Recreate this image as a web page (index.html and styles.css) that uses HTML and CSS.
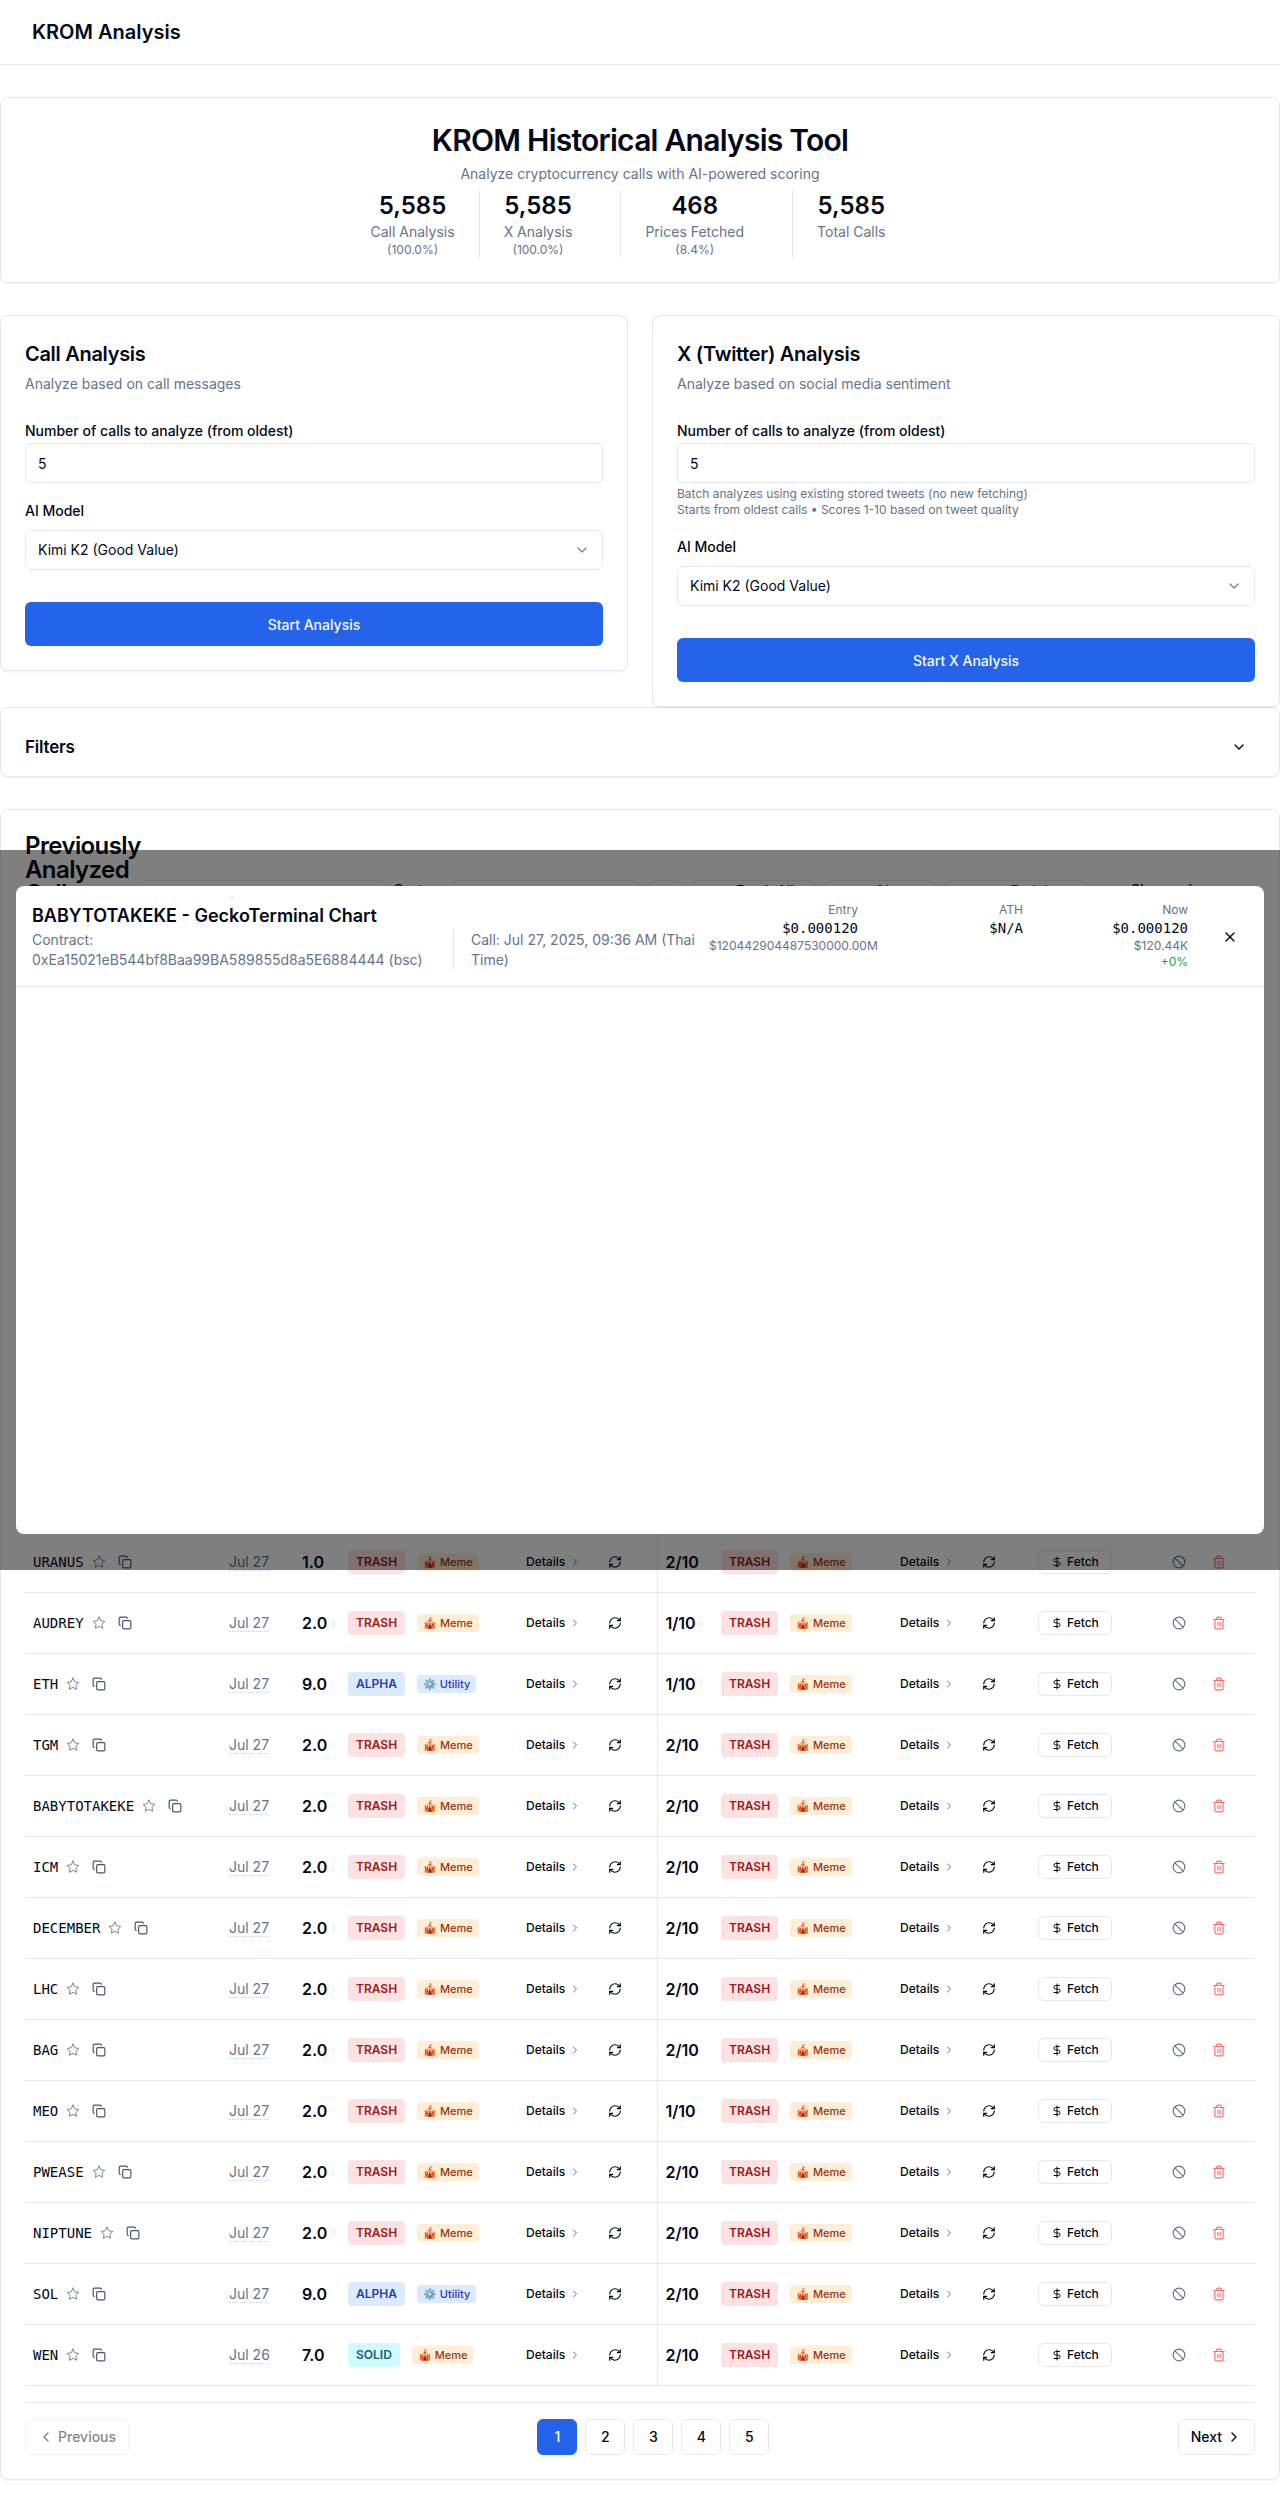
FILE: index.html
```html
<!DOCTYPE html>
<html lang="en">
<head>
  <meta charset="UTF-8">
  <meta name="viewport" content="width=device-width, initial-scale=1.0">
  <title>KROM Analysis</title>
  <link rel="stylesheet" href="styles.css">
</head>
<body>

<svg class="sprite" xmlns="http://www.w3.org/2000/svg">
  <symbol id="i-star" viewBox="0 0 24 24"><polygon points="12 2 15.09 8.26 22 9.27 17 14.14 18.18 21.02 12 17.77 5.82 21.02 7 14.14 2 9.27 8.91 8.26 12 2"/></symbol>
  <symbol id="i-copy" viewBox="0 0 24 24"><rect x="8" y="8" width="14" height="14" rx="2" ry="2"/><path d="M4 16c-1.1 0-2-.9-2-2V4c0-1.1.9-2 2-2h10c1.1 0 2 .9 2 2"/></symbol>
  <symbol id="i-right" viewBox="0 0 24 24"><path d="m9 18 6-6-6-6"/></symbol>
  <symbol id="i-left" viewBox="0 0 24 24"><path d="m15 18-6-6 6-6"/></symbol>
  <symbol id="i-down" viewBox="0 0 24 24"><path d="m6 9 6 6 6-6"/></symbol>
  <symbol id="i-refresh" viewBox="0 0 24 24"><path d="M3 12a9 9 0 0 1 9-9 9.75 9.75 0 0 1 6.74 2.74L21 8"/><path d="M21 3v5h-5"/><path d="M21 12a9 9 0 0 1-9 9 9.75 9.75 0 0 1-6.74-2.74L3 16"/><path d="M8 16H3v5"/></symbol>
  <symbol id="i-dollar" viewBox="0 0 24 24"><path d="M12 2v20"/><path d="M17 5H9.5a3.5 3.5 0 0 0 0 7h5a3.5 3.5 0 0 1 0 7H6"/></symbol>
  <symbol id="i-ban" viewBox="0 0 24 24"><circle cx="12" cy="12" r="10"/><path d="m4.9 4.9 14.2 14.2"/></symbol>
  <symbol id="i-trash" viewBox="0 0 24 24"><path d="M3 6h18"/><path d="M19 6v14c0 1-1 2-2 2H7c-1 0-2-1-2-2V6"/><path d="M8 6V4c0-1 1-2 2-2h4c1 0 2 1 2 2v2"/><path d="M10 11v6"/><path d="M14 11v6"/></symbol>
  <symbol id="i-x" viewBox="0 0 24 24"><path d="M18 6 6 18"/><path d="m6 6 12 12"/></symbol>
</svg>

<header class="topbar">
  <h1 class="brand">KROM Analysis</h1>
</header>

<main class="page">

  <section class="card hero">
    <h2 class="hero-title">KROM Historical Analysis Tool</h2>
    <p class="hero-sub">Analyze cryptocurrency calls with AI-powered scoring</p>
    <div class="stats">
      <div class="stat">
        <div class="stat-num">5,585</div>
        <div class="stat-label">Call Analysis</div>
        <div class="stat-pct">(100.0%)</div>
      </div>
      <div class="stat">
        <div class="stat-num">5,585</div>
        <div class="stat-label">X Analysis</div>
        <div class="stat-pct">(100.0%)</div>
      </div>
      <div class="stat">
        <div class="stat-num">468</div>
        <div class="stat-label">Prices Fetched</div>
        <div class="stat-pct">(8.4%)</div>
      </div>
      <div class="stat">
        <div class="stat-num">5,585</div>
        <div class="stat-label">Total Calls</div>
      </div>
    </div>
  </section>

  <div class="panels">
    <section class="card panel">
      <h3 class="panel-title">Call Analysis</h3>
      <p class="panel-sub">Analyze based on call messages</p>
      <label class="field-label">Number of calls to analyze (from oldest)</label>
      <input class="input" type="text" value="5">
      <label class="field-label model-label">AI Model</label>
      <div class="select">Kimi K2 (Good Value)<svg class="icon select-arrow"><use href="#i-down"/></svg></div>
      <button class="primary-btn">Start Analysis</button>
    </section>

    <section class="card panel">
      <h3 class="panel-title">X (Twitter) Analysis</h3>
      <p class="panel-sub">Analyze based on social media sentiment</p>
      <label class="field-label">Number of calls to analyze (from oldest)</label>
      <input class="input" type="text" value="5">
      <p class="help">Batch analyzes using existing stored tweets (no new fetching)<br>Starts from oldest calls • Scores 1-10 based on tweet quality</p>
      <label class="field-label model-label">AI Model</label>
      <div class="select">Kimi K2 (Good Value)<svg class="icon select-arrow"><use href="#i-down"/></svg></div>
      <button class="primary-btn">Start X Analysis</button>
    </section>
  </div>

  <section class="card filters">
    <h3 class="filters-title">Filters</h3>
    <svg class="icon filters-arrow"><use href="#i-down"/></svg>
  </section>

  <section class="card calls">
    <div class="calls-head">
      <h2 class="calls-title">Previously Analyzed Calls</h2>
      <div class="controls">
        <div class="control search"></div>
        <span class="control-text sort-label">Sort</span>
        <div class="control sort-select"></div>
        <div class="control sort-dir"></div>
        <div class="control fetch-all">Fetch All</div>
        <div class="control clear-btn">Clear</div>
        <div class="control enrich-btn">Enrich</div>
        <span class="control-text show-label">Show coins</span>
      </div>
    </div>

    <table class="calls-table">
      <colgroup>
        <col class="c-token"><col class="c-date"><col class="c-score"><col class="c-tags"><col class="c-details"><col class="c-refresh">
        <col class="c-xscore"><col class="c-xtags"><col class="c-details"><col class="c-xrefresh"><col class="c-fetch"><col class="c-actions">
      </colgroup>
      <tbody>
        <!-- rows above this point sit behind the chart modal -->
        <tr class="under-modal"><td colspan="12"></td></tr>

        <tr>
          <td><div class="token"><span class="ticker">URANUS</span><svg class="icon star"><use href="#i-star"/></svg><svg class="icon copy"><use href="#i-copy"/></svg></div></td>
          <td><span class="date">Jul 27</span></td>
          <td class="score">1.0</td>
          <td><div class="tags"><span class="tier trash">TRASH</span><span class="tag meme">🎪 Meme</span></div></td>
          <td><span class="details">Details<svg class="icon"><use href="#i-right"/></svg></span></td>
          <td><svg class="icon refresh"><use href="#i-refresh"/></svg></td>
          <td class="score x-score">2/10</td>
          <td><div class="tags"><span class="tier trash">TRASH</span><span class="tag meme">🎪 Meme</span></div></td>
          <td><span class="details">Details<svg class="icon"><use href="#i-right"/></svg></span></td>
          <td><svg class="icon refresh"><use href="#i-refresh"/></svg></td>
          <td><span class="fetch"><svg class="icon"><use href="#i-dollar"/></svg>Fetch</span></td>
          <td><div class="actions"><svg class="icon ban"><use href="#i-ban"/></svg><svg class="icon del"><use href="#i-trash"/></svg></div></td>
        </tr>
        <tr>
          <td><div class="token"><span class="ticker">AUDREY</span><svg class="icon star"><use href="#i-star"/></svg><svg class="icon copy"><use href="#i-copy"/></svg></div></td>
          <td><span class="date">Jul 27</span></td>
          <td class="score">2.0</td>
          <td><div class="tags"><span class="tier trash">TRASH</span><span class="tag meme">🎪 Meme</span></div></td>
          <td><span class="details">Details<svg class="icon"><use href="#i-right"/></svg></span></td>
          <td><svg class="icon refresh"><use href="#i-refresh"/></svg></td>
          <td class="score x-score">1/10</td>
          <td><div class="tags"><span class="tier trash">TRASH</span><span class="tag meme">🎪 Meme</span></div></td>
          <td><span class="details">Details<svg class="icon"><use href="#i-right"/></svg></span></td>
          <td><svg class="icon refresh"><use href="#i-refresh"/></svg></td>
          <td><span class="fetch"><svg class="icon"><use href="#i-dollar"/></svg>Fetch</span></td>
          <td><div class="actions"><svg class="icon ban"><use href="#i-ban"/></svg><svg class="icon del"><use href="#i-trash"/></svg></div></td>
        </tr>
        <tr>
          <td><div class="token"><span class="ticker">ETH</span><svg class="icon star"><use href="#i-star"/></svg><svg class="icon copy"><use href="#i-copy"/></svg></div></td>
          <td><span class="date">Jul 27</span></td>
          <td class="score">9.0</td>
          <td><div class="tags"><span class="tier alpha">ALPHA</span><span class="tag utility">⚙️ Utility</span></div></td>
          <td><span class="details">Details<svg class="icon"><use href="#i-right"/></svg></span></td>
          <td><svg class="icon refresh"><use href="#i-refresh"/></svg></td>
          <td class="score x-score">1/10</td>
          <td><div class="tags"><span class="tier trash">TRASH</span><span class="tag meme">🎪 Meme</span></div></td>
          <td><span class="details">Details<svg class="icon"><use href="#i-right"/></svg></span></td>
          <td><svg class="icon refresh"><use href="#i-refresh"/></svg></td>
          <td><span class="fetch"><svg class="icon"><use href="#i-dollar"/></svg>Fetch</span></td>
          <td><div class="actions"><svg class="icon ban"><use href="#i-ban"/></svg><svg class="icon del"><use href="#i-trash"/></svg></div></td>
        </tr>
        <tr>
          <td><div class="token"><span class="ticker">TGM</span><svg class="icon star"><use href="#i-star"/></svg><svg class="icon copy"><use href="#i-copy"/></svg></div></td>
          <td><span class="date">Jul 27</span></td>
          <td class="score">2.0</td>
          <td><div class="tags"><span class="tier trash">TRASH</span><span class="tag meme">🎪 Meme</span></div></td>
          <td><span class="details">Details<svg class="icon"><use href="#i-right"/></svg></span></td>
          <td><svg class="icon refresh"><use href="#i-refresh"/></svg></td>
          <td class="score x-score">2/10</td>
          <td><div class="tags"><span class="tier trash">TRASH</span><span class="tag meme">🎪 Meme</span></div></td>
          <td><span class="details">Details<svg class="icon"><use href="#i-right"/></svg></span></td>
          <td><svg class="icon refresh"><use href="#i-refresh"/></svg></td>
          <td><span class="fetch"><svg class="icon"><use href="#i-dollar"/></svg>Fetch</span></td>
          <td><div class="actions"><svg class="icon ban"><use href="#i-ban"/></svg><svg class="icon del"><use href="#i-trash"/></svg></div></td>
        </tr>
        <tr>
          <td><div class="token"><span class="ticker">BABYTOTAKEKE</span><svg class="icon star"><use href="#i-star"/></svg><svg class="icon copy"><use href="#i-copy"/></svg></div></td>
          <td><span class="date">Jul 27</span></td>
          <td class="score">2.0</td>
          <td><div class="tags"><span class="tier trash">TRASH</span><span class="tag meme">🎪 Meme</span></div></td>
          <td><span class="details">Details<svg class="icon"><use href="#i-right"/></svg></span></td>
          <td><svg class="icon refresh"><use href="#i-refresh"/></svg></td>
          <td class="score x-score">2/10</td>
          <td><div class="tags"><span class="tier trash">TRASH</span><span class="tag meme">🎪 Meme</span></div></td>
          <td><span class="details">Details<svg class="icon"><use href="#i-right"/></svg></span></td>
          <td><svg class="icon refresh"><use href="#i-refresh"/></svg></td>
          <td><span class="fetch"><svg class="icon"><use href="#i-dollar"/></svg>Fetch</span></td>
          <td><div class="actions"><svg class="icon ban"><use href="#i-ban"/></svg><svg class="icon del"><use href="#i-trash"/></svg></div></td>
        </tr>
        <tr>
          <td><div class="token"><span class="ticker">ICM</span><svg class="icon star"><use href="#i-star"/></svg><svg class="icon copy"><use href="#i-copy"/></svg></div></td>
          <td><span class="date">Jul 27</span></td>
          <td class="score">2.0</td>
          <td><div class="tags"><span class="tier trash">TRASH</span><span class="tag meme">🎪 Meme</span></div></td>
          <td><span class="details">Details<svg class="icon"><use href="#i-right"/></svg></span></td>
          <td><svg class="icon refresh"><use href="#i-refresh"/></svg></td>
          <td class="score x-score">2/10</td>
          <td><div class="tags"><span class="tier trash">TRASH</span><span class="tag meme">🎪 Meme</span></div></td>
          <td><span class="details">Details<svg class="icon"><use href="#i-right"/></svg></span></td>
          <td><svg class="icon refresh"><use href="#i-refresh"/></svg></td>
          <td><span class="fetch"><svg class="icon"><use href="#i-dollar"/></svg>Fetch</span></td>
          <td><div class="actions"><svg class="icon ban"><use href="#i-ban"/></svg><svg class="icon del"><use href="#i-trash"/></svg></div></td>
        </tr>
        <tr>
          <td><div class="token"><span class="ticker">DECEMBER</span><svg class="icon star"><use href="#i-star"/></svg><svg class="icon copy"><use href="#i-copy"/></svg></div></td>
          <td><span class="date">Jul 27</span></td>
          <td class="score">2.0</td>
          <td><div class="tags"><span class="tier trash">TRASH</span><span class="tag meme">🎪 Meme</span></div></td>
          <td><span class="details">Details<svg class="icon"><use href="#i-right"/></svg></span></td>
          <td><svg class="icon refresh"><use href="#i-refresh"/></svg></td>
          <td class="score x-score">2/10</td>
          <td><div class="tags"><span class="tier trash">TRASH</span><span class="tag meme">🎪 Meme</span></div></td>
          <td><span class="details">Details<svg class="icon"><use href="#i-right"/></svg></span></td>
          <td><svg class="icon refresh"><use href="#i-refresh"/></svg></td>
          <td><span class="fetch"><svg class="icon"><use href="#i-dollar"/></svg>Fetch</span></td>
          <td><div class="actions"><svg class="icon ban"><use href="#i-ban"/></svg><svg class="icon del"><use href="#i-trash"/></svg></div></td>
        </tr>
        <tr>
          <td><div class="token"><span class="ticker">LHC</span><svg class="icon star"><use href="#i-star"/></svg><svg class="icon copy"><use href="#i-copy"/></svg></div></td>
          <td><span class="date">Jul 27</span></td>
          <td class="score">2.0</td>
          <td><div class="tags"><span class="tier trash">TRASH</span><span class="tag meme">🎪 Meme</span></div></td>
          <td><span class="details">Details<svg class="icon"><use href="#i-right"/></svg></span></td>
          <td><svg class="icon refresh"><use href="#i-refresh"/></svg></td>
          <td class="score x-score">2/10</td>
          <td><div class="tags"><span class="tier trash">TRASH</span><span class="tag meme">🎪 Meme</span></div></td>
          <td><span class="details">Details<svg class="icon"><use href="#i-right"/></svg></span></td>
          <td><svg class="icon refresh"><use href="#i-refresh"/></svg></td>
          <td><span class="fetch"><svg class="icon"><use href="#i-dollar"/></svg>Fetch</span></td>
          <td><div class="actions"><svg class="icon ban"><use href="#i-ban"/></svg><svg class="icon del"><use href="#i-trash"/></svg></div></td>
        </tr>
        <tr>
          <td><div class="token"><span class="ticker">BAG</span><svg class="icon star"><use href="#i-star"/></svg><svg class="icon copy"><use href="#i-copy"/></svg></div></td>
          <td><span class="date">Jul 27</span></td>
          <td class="score">2.0</td>
          <td><div class="tags"><span class="tier trash">TRASH</span><span class="tag meme">🎪 Meme</span></div></td>
          <td><span class="details">Details<svg class="icon"><use href="#i-right"/></svg></span></td>
          <td><svg class="icon refresh"><use href="#i-refresh"/></svg></td>
          <td class="score x-score">2/10</td>
          <td><div class="tags"><span class="tier trash">TRASH</span><span class="tag meme">🎪 Meme</span></div></td>
          <td><span class="details">Details<svg class="icon"><use href="#i-right"/></svg></span></td>
          <td><svg class="icon refresh"><use href="#i-refresh"/></svg></td>
          <td><span class="fetch"><svg class="icon"><use href="#i-dollar"/></svg>Fetch</span></td>
          <td><div class="actions"><svg class="icon ban"><use href="#i-ban"/></svg><svg class="icon del"><use href="#i-trash"/></svg></div></td>
        </tr>
        <tr>
          <td><div class="token"><span class="ticker">MEO</span><svg class="icon star"><use href="#i-star"/></svg><svg class="icon copy"><use href="#i-copy"/></svg></div></td>
          <td><span class="date">Jul 27</span></td>
          <td class="score">2.0</td>
          <td><div class="tags"><span class="tier trash">TRASH</span><span class="tag meme">🎪 Meme</span></div></td>
          <td><span class="details">Details<svg class="icon"><use href="#i-right"/></svg></span></td>
          <td><svg class="icon refresh"><use href="#i-refresh"/></svg></td>
          <td class="score x-score">1/10</td>
          <td><div class="tags"><span class="tier trash">TRASH</span><span class="tag meme">🎪 Meme</span></div></td>
          <td><span class="details">Details<svg class="icon"><use href="#i-right"/></svg></span></td>
          <td><svg class="icon refresh"><use href="#i-refresh"/></svg></td>
          <td><span class="fetch"><svg class="icon"><use href="#i-dollar"/></svg>Fetch</span></td>
          <td><div class="actions"><svg class="icon ban"><use href="#i-ban"/></svg><svg class="icon del"><use href="#i-trash"/></svg></div></td>
        </tr>
        <tr>
          <td><div class="token"><span class="ticker">PWEASE</span><svg class="icon star"><use href="#i-star"/></svg><svg class="icon copy"><use href="#i-copy"/></svg></div></td>
          <td><span class="date">Jul 27</span></td>
          <td class="score">2.0</td>
          <td><div class="tags"><span class="tier trash">TRASH</span><span class="tag meme">🎪 Meme</span></div></td>
          <td><span class="details">Details<svg class="icon"><use href="#i-right"/></svg></span></td>
          <td><svg class="icon refresh"><use href="#i-refresh"/></svg></td>
          <td class="score x-score">2/10</td>
          <td><div class="tags"><span class="tier trash">TRASH</span><span class="tag meme">🎪 Meme</span></div></td>
          <td><span class="details">Details<svg class="icon"><use href="#i-right"/></svg></span></td>
          <td><svg class="icon refresh"><use href="#i-refresh"/></svg></td>
          <td><span class="fetch"><svg class="icon"><use href="#i-dollar"/></svg>Fetch</span></td>
          <td><div class="actions"><svg class="icon ban"><use href="#i-ban"/></svg><svg class="icon del"><use href="#i-trash"/></svg></div></td>
        </tr>
        <tr>
          <td><div class="token"><span class="ticker">NIPTUNE</span><svg class="icon star"><use href="#i-star"/></svg><svg class="icon copy"><use href="#i-copy"/></svg></div></td>
          <td><span class="date">Jul 27</span></td>
          <td class="score">2.0</td>
          <td><div class="tags"><span class="tier trash">TRASH</span><span class="tag meme">🎪 Meme</span></div></td>
          <td><span class="details">Details<svg class="icon"><use href="#i-right"/></svg></span></td>
          <td><svg class="icon refresh"><use href="#i-refresh"/></svg></td>
          <td class="score x-score">2/10</td>
          <td><div class="tags"><span class="tier trash">TRASH</span><span class="tag meme">🎪 Meme</span></div></td>
          <td><span class="details">Details<svg class="icon"><use href="#i-right"/></svg></span></td>
          <td><svg class="icon refresh"><use href="#i-refresh"/></svg></td>
          <td><span class="fetch"><svg class="icon"><use href="#i-dollar"/></svg>Fetch</span></td>
          <td><div class="actions"><svg class="icon ban"><use href="#i-ban"/></svg><svg class="icon del"><use href="#i-trash"/></svg></div></td>
        </tr>
        <tr>
          <td><div class="token"><span class="ticker">SOL</span><svg class="icon star"><use href="#i-star"/></svg><svg class="icon copy"><use href="#i-copy"/></svg></div></td>
          <td><span class="date">Jul 27</span></td>
          <td class="score">9.0</td>
          <td><div class="tags"><span class="tier alpha">ALPHA</span><span class="tag utility">⚙️ Utility</span></div></td>
          <td><span class="details">Details<svg class="icon"><use href="#i-right"/></svg></span></td>
          <td><svg class="icon refresh"><use href="#i-refresh"/></svg></td>
          <td class="score x-score">2/10</td>
          <td><div class="tags"><span class="tier trash">TRASH</span><span class="tag meme">🎪 Meme</span></div></td>
          <td><span class="details">Details<svg class="icon"><use href="#i-right"/></svg></span></td>
          <td><svg class="icon refresh"><use href="#i-refresh"/></svg></td>
          <td><span class="fetch"><svg class="icon"><use href="#i-dollar"/></svg>Fetch</span></td>
          <td><div class="actions"><svg class="icon ban"><use href="#i-ban"/></svg><svg class="icon del"><use href="#i-trash"/></svg></div></td>
        </tr>
        <tr>
          <td><div class="token"><span class="ticker">WEN</span><svg class="icon star"><use href="#i-star"/></svg><svg class="icon copy"><use href="#i-copy"/></svg></div></td>
          <td><span class="date">Jul 26</span></td>
          <td class="score">7.0</td>
          <td><div class="tags"><span class="tier solid">SOLID</span><span class="tag meme">🎪 Meme</span></div></td>
          <td><span class="details">Details<svg class="icon"><use href="#i-right"/></svg></span></td>
          <td><svg class="icon refresh"><use href="#i-refresh"/></svg></td>
          <td class="score x-score">2/10</td>
          <td><div class="tags"><span class="tier trash">TRASH</span><span class="tag meme">🎪 Meme</span></div></td>
          <td><span class="details">Details<svg class="icon"><use href="#i-right"/></svg></span></td>
          <td><svg class="icon refresh"><use href="#i-refresh"/></svg></td>
          <td><span class="fetch"><svg class="icon"><use href="#i-dollar"/></svg>Fetch</span></td>
          <td><div class="actions"><svg class="icon ban"><use href="#i-ban"/></svg><svg class="icon del"><use href="#i-trash"/></svg></div></td>
        </tr>
      </tbody>
    </table>

    <div class="pagination">
      <button class="page-btn nav disabled"><svg class="icon"><use href="#i-left"/></svg>Previous</button>
      <div class="page-nums">
        <button class="page-btn num active">1</button>
        <button class="page-btn num">2</button>
        <button class="page-btn num">3</button>
        <button class="page-btn num">4</button>
        <button class="page-btn num">5</button>
      </div>
      <button class="page-btn nav">Next<svg class="icon"><use href="#i-right"/></svg></button>
    </div>
  </section>
</main>

<div class="overlay">
  <div class="modal">
    <div class="modal-head">
      <div class="modal-info">
        <h3 class="modal-title">BABYTOTAKEKE - GeckoTerminal Chart</h3>
        <div class="modal-meta">
          <div class="contract">Contract: 0xEa15021eB544bf8Baa99BA589855d8a5E6884444 (bsc)</div>
          <div class="call-time">Call: Jul 27, 2025, 09:36 AM (Thai Time)</div>
        </div>
      </div>
      <div class="prices">
        <div class="price">
          <div class="price-label">Entry</div>
          <div class="price-val">$0.000120</div>
          <div class="price-cap">$120442904487530000.00M</div>
        </div>
        <div class="price">
          <div class="price-label">ATH</div>
          <div class="price-val">$N/A</div>
        </div>
        <div class="price">
          <div class="price-label">Now</div>
          <div class="price-val">$0.000120</div>
          <div class="price-cap">$120.44K</div>
          <div class="price-gain">+0%</div>
        </div>
      </div>
      <svg class="icon modal-close"><use href="#i-x"/></svg>
    </div>
  </div>
</div>

</body>
</html>
```

FILE: styles.css
```css
* {
  box-sizing: border-box;
}

body {
  font-family: Inter, "Noto Sans", sans-serif;
  background-color: #fff;
  margin: 0;
  color: #020817;
  font-size: 14px;
  line-height: 20px;
  position: relative;
}

h1, h2, h3, p {
  margin: 0;
}

button {
  font-family: inherit;
}

.sprite {
  display: none;
}

.icon {
  width: 12px;
  height: 12px;
  fill: none;
  stroke: currentColor;
  stroke-width: 2;
  stroke-linecap: round;
  stroke-linejoin: round;
  flex-shrink: 0;
}

.topbar {
  height: 65px;
  padding: 0 32px;
  display: flex;
  align-items: center;
  border-bottom: 1px solid #e2e8f0;
}

.brand {
  font-size: 20px;
  font-weight: 600;
  line-height: 28px;
}

.page {
  padding: 32px 0;
}

.card {
  background: #fff;
  border: 1px solid #e2e8f0;
  border-radius: 8px;
  box-shadow: 0 1px 2px rgba(0, 0, 0, 0.05);
}

/* Hero */
.hero {
  padding: 24px;
  text-align: center;
  margin-bottom: 32px;
}

.hero-title {
  font-size: 30px;
  line-height: 36px;
  font-weight: 600;
  letter-spacing: -0.75px;
}

.hero-sub {
  color: #64748b;
  margin-top: 6px;
  margin-bottom: 6px;
}

.stats {
  display: flex;
  justify-content: center;
}

.stat {
  padding-right: 48px;
  margin-right: 24px;
  border-right: 1px solid #e2e8f0;
}

.stat:first-child {
  padding-right: 24px;
}

.stat:last-child {
  padding-right: 24px;
  margin-right: 0;
  border-right: none;
}

.stat-num {
  font-size: 24px;
  line-height: 32px;
  font-weight: 600;
}

.stat-label {
  color: #64748b;
}

.stat-pct {
  color: #64748b;
  font-size: 12px;
  line-height: 16px;
}

/* Analysis panels */
.panels {
  display: grid;
  grid-template-columns: 1fr 1fr;
  gap: 24px;
  align-items: start;
}

.panel {
  padding: 24px;
}

.panel-title {
  font-size: 20px;
  line-height: 28px;
  font-weight: 600;
  letter-spacing: -0.3px;
}

.panel-sub {
  color: #64748b;
  margin-top: 6px;
  margin-bottom: 27px;
}

.field-label {
  display: block;
  font-weight: 500;
  margin-bottom: 2px;
}

.model-label {
  margin-top: 18px;
  margin-bottom: 9px;
}

.help + .model-label {
  margin-top: 19px;
}

.input, .select {
  display: block;
  width: 100%;
  height: 40px;
  padding: 0 12px;
  border: 1px solid #e2e8f0;
  border-radius: 6px;
  background: #fff;
  font-family: inherit;
  font-size: 14px;
  color: #020817;
}

.select {
  display: flex;
  align-items: center;
  justify-content: space-between;
}

.select-arrow {
  width: 16px;
  height: 16px;
  opacity: 0.5;
}

.help {
  font-size: 12px;
  line-height: 16px;
  color: #64748b;
  margin-top: 3px;
}

.primary-btn {
  display: block;
  width: 100%;
  height: 44px;
  margin-top: 32px;
  border: none;
  border-radius: 6px;
  background-color: #2563eb;
  color: #f8fafc;
  font-size: 14px;
  font-weight: 500;
}

/* Filters */
.filters {
  height: 70px;
  padding: 10px 24px 0;
  display: flex;
  align-items: center;
  justify-content: space-between;
  margin-bottom: 32px;
}

.filters-title {
  font-size: 17px;
  font-weight: 600;
  letter-spacing: -0.2px;
}

.filters-arrow {
  width: 16px;
  height: 16px;
  margin-right: 8px;
}

/* Previously analyzed calls */
.calls {
  padding: 24px;
}

.calls-head {
  display: flex;
  align-items: flex-start;
}

.calls-title {
  width: 116px;
  font-size: 24px;
  line-height: 24px;
  font-weight: 600;
  letter-spacing: -0.6px;
}

.controls {
  display: flex;
  align-items: flex-start;
  margin-top: 46px;
  height: 36px;
}

.control {
  height: 36px;
  border: 1px solid #e2e8f0;
  border-radius: 6px;
  font-weight: 500;
}

.control-text {
  font-weight: 500;
  color: #020817;
}

.search {
  width: 245px;
}

.sort-label {
  margin-left: 8px;
  width: 57px;
}

.sort-select {
  width: 188px;
}

.sort-dir {
  width: 32px;
  margin-left: 10px;
}

.fetch-all {
  width: 125px;
  margin-left: 10px;
  padding-left: 44px;
}

.clear-btn {
  width: 110px;
  margin-left: 9px;
  padding-left: 49px;
  color: #dc2626;
}

.enrich-btn {
  width: 143px;
  margin-left: 9px;
  padding-left: 65px;
  color: #1e40af;
}

.show-label {
  margin-left: 44px;
}

.calls-table {
  width: 100%;
  table-layout: fixed;
  border-collapse: collapse;
}

.calls-table tr {
  border-bottom: 1px solid #e2e8f0;
}

.calls-table td {
  height: 61px;
  padding: 8px;
  vertical-align: middle;
  white-space: nowrap;
}

.calls-table .under-modal td {
  height: 615px;
}

.c-token { width: 196px; }
.c-date { width: 73px; }
.c-score { width: 46px; }
.c-tags { width: 178px; }
.c-details { width: 80px; }
.c-refresh { width: 59px; }
.c-xscore { width: 56px; }
.c-xtags { width: 179px; }
.c-xrefresh { width: 58px; }
.c-fetch { width: 89px; }
.c-actions { width: 136px; }

.token {
  display: flex;
  align-items: center;
}

.ticker {
  font-family: "DejaVu Sans Mono", monospace;
  font-size: 14px;
}

.star {
  width: 14px;
  height: 14px;
  margin-left: 8px;
  color: #64748b;
  stroke-width: 1.5;
}

.copy {
  width: 14px;
  height: 14px;
  margin-left: 12px;
  color: #475569;
}

.date {
  color: #64748b;
  border-bottom: 1px dotted #cbd5e1;
}

.score {
  font-size: 16px;
  font-weight: 600;
}

.x-score {
  border-left: 1px solid #e2e8f0;
}

.tags {
  display: flex;
  align-items: center;
  gap: 12px;
}

.tier {
  display: inline-block;
  height: 24px;
  padding: 0 8px;
  border-radius: 4px;
  font-size: 12px;
  line-height: 24px;
  font-weight: 600;
}

.trash { background: #fee2e2; color: #991b1b; }
.alpha { background: #dbeafe; color: #1e40af; }
.solid { background: #cffafe; color: #155e75; }

.tag {
  display: inline-block;
  height: 18px;
  padding: 0 6px;
  border-radius: 4px;
  font-size: 11px;
  line-height: 18px;
  font-weight: 500;
}

.meme { background: #ffedd5; color: #9a3412; }
.utility { background: #dbeafe; color: #1e40af; }

.details {
  display: inline-flex;
  align-items: center;
  gap: 4px;
  font-size: 12px;
  font-weight: 500;
}

.details .icon {
  color: #64748b;
}

.refresh {
  display: block;
  width: 14px;
  height: 14px;
  margin-left: 2px;
}

.fetch {
  display: inline-flex;
  align-items: center;
  gap: 4px;
  height: 24px;
  padding: 0 12px;
  border: 1px solid #e2e8f0;
  border-radius: 6px;
  font-size: 12px;
  font-weight: 500;
}

.actions {
  display: flex;
  align-items: center;
  gap: 26px;
  padding-left: 45px;
}

.ban {
  width: 14px;
  height: 14px;
  color: #64748b;
}

.del {
  width: 14px;
  height: 14px;
  color: #f87171;
}

/* Pagination */
.pagination {
  display: flex;
  align-items: center;
  justify-content: space-between;
  margin-top: 16px;
  padding-top: 16px;
  border-top: 1px solid #e2e8f0;
}

.page-nums {
  display: flex;
  gap: 8px;
}

.page-btn {
  height: 36px;
  border: 1px solid #e2e8f0;
  border-radius: 6px;
  background: #fff;
  color: #020817;
  font-size: 14px;
  font-weight: 500;
  padding: 0;
}

.num {
  width: 40px;
}

.nav {
  display: inline-flex;
  align-items: center;
  gap: 4px;
  padding: 0 12px;
}

.nav .icon {
  width: 16px;
  height: 16px;
}

.active {
  background-color: #2563eb;
  border-color: #2563eb;
  color: #f8fafc;
}

.disabled {
  opacity: 0.5;
}

/* Chart modal */
.overlay {
  position: absolute;
  top: 850px;
  left: 0;
  right: 0;
  height: 720px;
  padding: 36px 16px;
  background: rgba(0, 0, 0, 0.5);
}

.modal {
  height: 648px;
  background: #fff;
  border-radius: 8px;
}

.modal-head {
  height: 101px;
  padding: 16px;
  display: flex;
  border-bottom: 1px solid #e2e8f0;
}

.modal-info {
  width: 677px;
}

.modal-title {
  font-size: 18px;
  line-height: 28px;
  font-weight: 600;
}

.modal-meta {
  display: flex;
  color: #64748b;
}

.contract {
  width: 422px;
  padding-right: 16px;
  border-right: 1px solid #e2e8f0;
}

.call-time {
  width: 245px;
  padding-left: 17px;
}

.prices {
  display: grid;
  grid-template-columns: repeat(3, 149px);
  gap: 16px;
}

.price {
  text-align: right;
  font-size: 12px;
  line-height: 16px;
  white-space: nowrap;
}

.price-label, .price-cap {
  color: #64748b;
}

.price-val {
  font-family: "DejaVu Sans Mono", monospace;
  font-size: 14px;
  line-height: 20px;
}

.price-gain {
  color: #16a34a;
}

.modal-close {
  width: 16px;
  height: 16px;
  margin: 27px 0 0 34px;
}
```
